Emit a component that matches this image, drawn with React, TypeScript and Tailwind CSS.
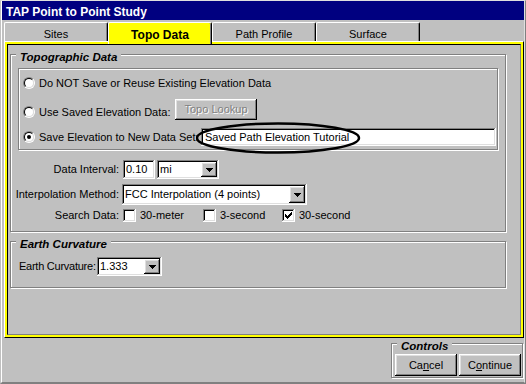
import React from "react";

const RAISED =
  "shadow-[inset_-1px_-1px_#000,inset_1px_1px_#fff,inset_-2px_-2px_#808080,inset_2px_2px_#dfdfdf]";
const SUNKEN =
  "shadow-[inset_-1px_-1px_#fff,inset_1px_1px_#808080,inset_-2px_-2px_#dfdfdf,inset_2px_2px_#000]";
const ETCHED = "relative border border-[#808080] shadow-[inset_1px_1px_#fff,1px_1px_#fff]";

function Legend({ children }: { children: React.ReactNode }) {
  return (
    <span className="absolute -top-[5px] left-[5px] bg-[#c0c0c0] px-[4px] text-[11.5px] font-bold italic leading-[14px]">
      {children}
    </span>
  );
}

function Radio({ checked }: { checked?: boolean }) {
  return (
    <span className="grid size-[12px] shrink-0 place-items-center rounded-full border border-t-[#808080] border-l-[#808080] border-r-white border-b-white">
      <span className="grid size-full place-items-center rounded-full border border-t-black border-l-black border-r-[#dfdfdf] border-b-[#dfdfdf] bg-white">
        {checked ? <span className="size-[4px] rounded-full bg-black" /> : null}
      </span>
    </span>
  );
}

function Check({ checked }: { checked?: boolean }) {
  return (
    <span className={`grid size-[13px] shrink-0 place-items-center bg-white ${SUNKEN}`}>
      {checked ? (
        <svg width="7" height="7" viewBox="0 0 7 7" shapeRendering="crispEdges">
          <rect x="6" y="0" width="1" height="1" />
          <rect x="5" y="1" width="2" height="1" />
          <rect x="0" y="2" width="1" height="1" />
          <rect x="4" y="2" width="3" height="1" />
          <rect x="0" y="3" width="2" height="1" />
          <rect x="3" y="3" width="3" height="1" />
          <rect x="0" y="4" width="5" height="1" />
          <rect x="1" y="5" width="3" height="1" />
          <rect x="2" y="6" width="1" height="1" />
        </svg>
      ) : null}
    </span>
  );
}

function Arrow() {
  return (
    <svg width="7" height="4" viewBox="0 0 7 4" shapeRendering="crispEdges">
      <rect x="0" y="0" width="7" height="1" />
      <rect x="1" y="1" width="5" height="1" />
      <rect x="2" y="2" width="3" height="1" />
      <rect x="3" y="3" width="1" height="1" />
    </svg>
  );
}

function Combo({ value, className }: { value: string; className: string }) {
  return (
    <div className={`flex bg-white p-[2px] ${SUNKEN} ${className}`}>
      <span className="flex flex-1 items-center pl-[1px]">{value}</span>
      <span className={`grid w-[16px] place-items-center bg-[#c0c0c0] ${RAISED}`}>
        <Arrow />
      </span>
    </div>
  );
}

const TABS = ["Sites", "Topo Data", "Path Profile", "Surface"];

export default function App() {
  return (
    <div className="h-[384px] w-[526px] overflow-hidden border border-t-[#dfdfdf] border-l-[#c0c0c0] border-r-[#808080] border-b-[#808080] bg-[#c0c0c0] font-['Liberation_Sans',Arial,sans-serif] text-[11px] text-black">
      <div className="flex h-full flex-col border-l border-r border-b border-l-white border-r-[#dfdfdf] border-b-[#808080]">
        {/* title bar */}
        <div className="h-[19px] shrink-0 bg-[#000080] pl-[4px] pt-[4px] text-[12px] leading-[14px] font-bold text-white">
          TAP Point to Point Study
        </div>

        {/* tabs */}
        <div className="mt-[2px] ml-[2px] flex h-[19px] shrink-0 items-start">
          {TABS.map((t) =>
            t === "Topo Data" ? (
              <div
                key={t}
                className="relative z-10 flex h-[22px] w-[104px] items-start justify-center rounded-t-[2px] border-t border-l border-r border-t-white border-l-white border-r-black bg-[#ffff00] pt-[3px] text-[12px] font-bold shadow-[inset_-1px_0_#808080]"
              >
                {t}
              </div>
            ) : (
              <div
                key={t}
                className="flex h-[19px] w-[104px] items-start justify-center rounded-t-[2px] border-t border-l border-r border-t-white border-l-white border-r-black pt-[3px] shadow-[inset_-1px_0_#808080]"
              >
                {t}
              </div>
            ),
          )}
        </div>

        {/* tab page */}
        <div className="ml-[2px] h-[297px] w-[520px] shrink-0 border border-t-white border-l-white border-r-black border-b-black">
          <div className="h-full border-2 border-[#ffff00]">
            <div className="flex h-full flex-col border border-t-black border-l-black border-r-[#808080] border-b-[#808080]">
              {/* Topographic Data */}
              <div className={`mt-[9px] ml-[2px] flex h-[178px] w-[496px] flex-col ${ETCHED}`}>
                <Legend>Topographic Data</Legend>

                <div className={`mx-[7px] mt-[13px] flex h-[82px] flex-col ${ETCHED}`}>
                  <div className="mt-[4px] flex h-[20px] items-center gap-[4px] pl-[4px]">
                    <Radio />
                    <span>Do NOT Save or Reuse Existing Elevation Data</span>
                  </div>
                  <div className="mt-[9px] flex h-[20px] items-center gap-[4px] pl-[4px]">
                    <Radio />
                    <span className="w-[132px] whitespace-nowrap">Use Saved Elevation Data:</span>
                    <button
                      className={`mb-[6px] h-[21px] w-[82px] shrink-0 text-[#808080] [text-shadow:1px_1px_0_#fff] ${RAISED}`}
                    >
                      Topo Lookup
                    </button>
                  </div>
                  <div className="relative mt-[5px] flex h-[20px] items-center gap-[4px] pl-[4px]">
                    <Radio checked />
                    <span className="w-[158px] whitespace-nowrap">Save Elevation to New Data Set:</span>
                    <div className={`flex h-[18px] w-[295px] items-center bg-white px-[4px] ${SUNKEN}`}>
                      Saved Path Elevation Tutorial
                    </div>
                    {/* hand-drawn highlight */}
                    <svg
                      className="pointer-events-none absolute left-[177px] -top-[5px]"
                      width="166"
                      height="33"
                      viewBox="0 0 166 33"
                    >
                      <ellipse cx="82" cy="16" rx="81" ry="14.5" fill="none" stroke="#000" strokeWidth="2.5" />
                    </svg>
                  </div>
                </div>

                <div className="mt-[10px] flex h-[19px] items-center">
                  <span className="w-[108px] text-right">Data Interval:</span>
                  <div className={`ml-[4px] flex h-[19px] w-[32px] items-center bg-white px-[3px] ${SUNKEN}`}>
                    0.10
                  </div>
                  <Combo value="mi" className="ml-[2px] h-[19px] w-[62px]" />
                </div>

                <div className="mt-[5px] flex h-[21px] items-center">
                  <span className="w-[108px] text-right">Interpolation Method:</span>
                  <Combo value="FCC Interpolation (4 points)" className="ml-[3px] h-[21px] w-[185px]" />
                </div>

                <div className="mt-[3px] flex h-[15px] items-center">
                  <span className="w-[108px] text-right">Search Data:</span>
                  <div className="ml-[4px] flex">
                    <label className="flex w-[80px] items-center gap-[4px]">
                      <Check />
                      30-meter
                    </label>
                    <label className="flex w-[79px] items-center gap-[4px]">
                      <Check />
                      3-second
                    </label>
                    <label className="flex items-center gap-[4px]">
                      <Check checked />
                      30-second
                    </label>
                  </div>
                </div>
              </div>

              {/* Earth Curvature */}
              <div className={`mt-[9px] ml-[2px] h-[47px] w-[496px] ${ETCHED}`}>
                <Legend>Earth Curvature</Legend>
                <div className="flex h-[19px] items-center pl-[8px] mt-[15px]">
                  <span className="w-[78px] whitespace-nowrap tracking-[-0.25px]">Earth Curvature:</span>
                  <Combo value="1.333" className="h-[19px] w-[65px]" />
                </div>
              </div>
            </div>
          </div>
        </div>

        {/* Controls */}
        <div className={`mt-[5px] mr-[1px] flex h-[35px] w-[132px] shrink-0 items-start gap-[2px] self-end pt-[10px] pl-[3px] ${ETCHED}`}>
          <Legend>Controls</Legend>
          <button className={`grid h-[22px] w-[62px] place-items-center ${RAISED}`}>
            <span>
              Ca<u className="underline-offset-1">n</u>cel
            </span>
          </button>
          <button className={`grid h-[22px] w-[62px] place-items-center ${RAISED}`}>
            <span>
              C<u className="underline-offset-1">o</u>ntinue
            </span>
          </button>
        </div>
      </div>
    </div>
  );
}
